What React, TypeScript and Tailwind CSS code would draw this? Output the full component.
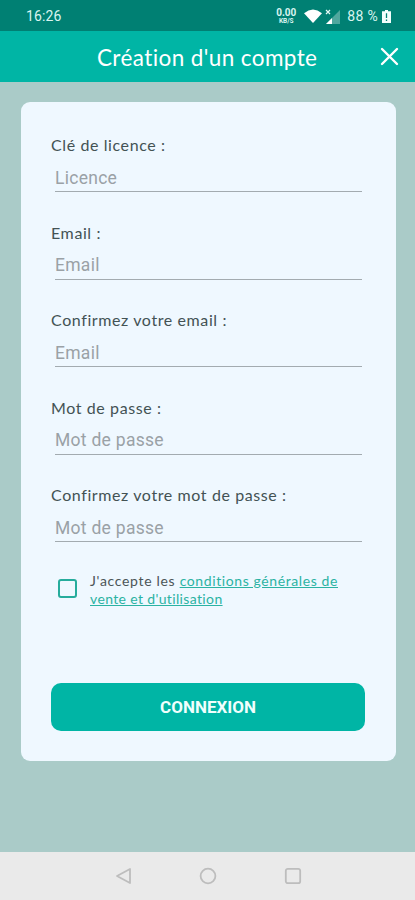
const fields = [
  { id: "licence", label: "Clé de licence :", placeholder: "Licence", type: "text" },
  { id: "email", label: "Email :", placeholder: "Email", type: "email" },
  { id: "email-confirm", label: "Confirmez votre email :", placeholder: "Email", type: "email" },
  { id: "password", label: "Mot de passe :", placeholder: "Mot de passe", type: "password" },
  { id: "password-confirm", label: "Confirmez votre mot de passe :", placeholder: "Mot de passe", type: "password" },
];

function StatusBar() {
  return (
    <div className="flex h-[31px] items-center bg-[#008073] pl-[26px] pr-[24px] pt-px font-['Roboto',sans-serif] text-[#d9f5f0]">
      <span className="text-[14px] tracking-[0.1px]">16:26</span>
      <div className="ml-auto flex flex-col items-center font-bold">
        <span className="text-[10px] leading-[10px]">0.00</span>
        <span className="text-[6.5px] leading-[6px]">KB/S</span>
      </div>
      <svg className="ml-[8px]" width="18" height="14" viewBox="0 0 18 14">
        <path d="M0 4.2Q9-3.2 18 4.2L9 14Z" fill="#fff" />
      </svg>
      <svg className="ml-[3px]" width="15" height="15" viewBox="0 0 15 15">
        <path d="M15 1V15H1Z" fill="#4fa79e" />
        <path d="M7 9V15H1Z" fill="#fff" />
        <path d="M1 1L5 5M5 1L1 5" stroke="#e6faf7" strokeWidth="1.2" />
      </svg>
      <span className="ml-[7px] text-[14px] tracking-[0.3px] whitespace-nowrap">88 %</span>
      <svg className="ml-[4px]" width="9" height="13" viewBox="0 0 9 13">
        <path d="M3 0H6V1.3H9V13H0V1.3H3Z" fill="#f2fffd" />
        <path d="M4.5 3.2V8M4.5 9.4V11" stroke="#008073" strokeWidth="1.3" />
      </svg>
    </div>
  );
}

function Header() {
  return (
    <header className="flex h-[51px] items-center bg-[#00b5a5] pl-[97px] pr-[16px] text-white">
      <h1 className="pt-0.5 text-[22.5px] tracking-[0.4px] whitespace-nowrap">Création d'un compte</h1>
      <button className="ml-auto" aria-label="Fermer">
        <svg width="19" height="19" viewBox="0 0 19 19" fill="none" stroke="currentColor" strokeWidth="2.4" strokeLinecap="round">
          <path d="M2 2L17 17M17 2L2 17" />
        </svg>
      </button>
    </header>
  );
}

function NavBar() {
  return (
    <nav className="flex h-12 items-center bg-[#eaeaea] pl-[115px] text-[#bdbdbd]">
      <svg width="17" height="18" viewBox="0 0 17 18" fill="none" stroke="currentColor" strokeWidth="1.8" strokeLinejoin="round">
        <path d="M15 2V16L2 9Z" />
      </svg>
      <svg className="ml-[67px]" width="18" height="18" viewBox="0 0 18 18" fill="none" stroke="currentColor" strokeWidth="1.8">
        <circle cx="9" cy="9" r="7.4" />
      </svg>
      <svg className="ml-[67px]" width="18" height="18" viewBox="0 0 18 18" fill="none" stroke="currentColor" strokeWidth="1.8">
        <rect x="1.8" y="1.8" width="14.4" height="14.4" rx="2" />
      </svg>
    </nav>
  );
}

function App() {
  return (
    <div className="flex h-[900px] w-[415px] flex-col overflow-hidden bg-[#aacbc8] font-['Lato',sans-serif]">
      <StatusBar />
      <Header />
      <main className="flex-1 pl-[21px] pt-5">
        <form className="flex h-[659px] w-[375px] flex-col rounded-[9px] bg-[#eff8ff] px-[30px] pt-[33px]">
          {fields.map((field) => (
            <div key={field.id} className="h-[87.5px]">
              <label
                htmlFor={field.id}
                className="block h-5 text-[16px] leading-5 tracking-[0.6px] text-[#435254] whitespace-nowrap"
              >
                {field.label}
              </label>
              <input
                id={field.id}
                type={field.type}
                placeholder={field.placeholder}
                className="ml-1 block h-[37px] w-[307px] border-b border-[#a3abb0] bg-transparent pt-[9px] font-['Roboto',sans-serif] text-[17.5px] tracking-[0.28px] text-[#3b4b4d] outline-none placeholder:text-[#9aa1a6]"
              />
            </div>
          ))}
          <div className="-mt-px flex items-start pl-[7px]">
            <input
              type="checkbox"
              id="cgu"
              className="mt-[7px] size-[19px] shrink-0 appearance-none rounded-[3px] border-2 border-[#26ac9c] checked:bg-[#26ac9c]"
            />
            <label htmlFor="cgu" className="ml-[13px] text-[14px] leading-[18px] tracking-[0.68px] text-[#4b5557] whitespace-nowrap">
              J'accepte les{" "}
              <a className="text-[#2bb3a3] underline underline-offset-1">
                <span className="tracking-[0.6px]">conditions générales de</span>
                <br />
                <span className="tracking-[0.36px]">vente et d'utilisation</span>
              </a>
            </label>
          </div>
          <button
            type="button"
            className="mb-[30px] mt-auto h-12 w-[314px] shrink-0 rounded-[10px] bg-[#00b5a5] pt-0.5 font-['Roboto',sans-serif] text-[17px] font-bold text-[#f0fffd]"
          >
            CONNEXION
          </button>
        </form>
      </main>
      <NavBar />
    </div>
  );
}

export default App;
